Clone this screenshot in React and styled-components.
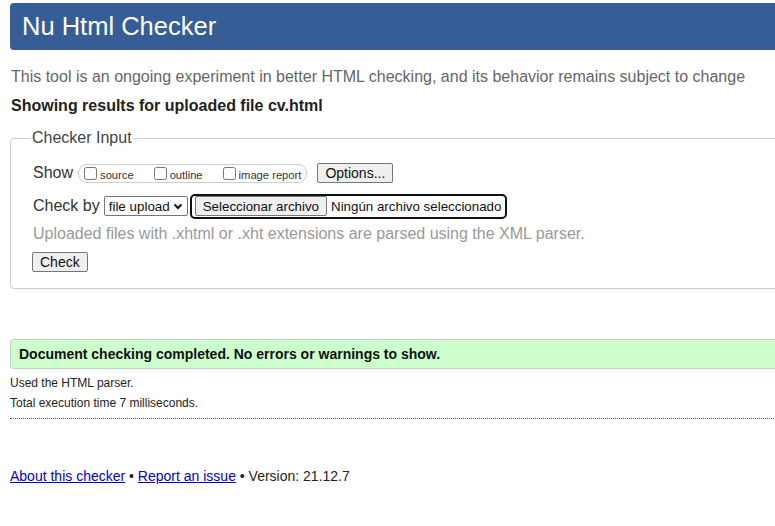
import React from "react"
import styled, { createGlobalStyle } from "styled-components"

const GlobalStyle = createGlobalStyle`
  html, body {
    margin: 0;
    padding: 0;
    background: #fff;
    overflow: hidden;
  }
  body {
    font-family: "Liberation Sans", Arial, sans-serif;
    color: #222;
  }
`

const Page = styled.div`
  width: 1000px;
  padding: 3px 0 0 10px;
`

const TitleBar = styled.h1`
  margin: 0;
  height: 47px;
  display: flex;
  align-items: center;
  padding-left: 12px;
  background: #365d95;
  border-radius: 4px;
  color: #fff;
  font-size: 25.5px;
  font-weight: normal;
`

const Intro = styled.p`
  margin: 17px 0 0 1px;
  line-height: 20px;
  font-size: 16px;
  color: #666;
`

const Showing = styled.p`
  margin: 9px 0 0 1px;
  line-height: 20px;
  font-size: 16px;
  font-weight: bold;
  color: #222;
`

const Fieldset = styled.fieldset`
  margin: 13px 0 0 0;
  padding: 11px 0 8px 22px;
  border: 1px solid #ccc;
  border-radius: 4px;
  display: flex;
  flex-direction: column;
`

const Legend = styled.legend`
  margin-left: -2px;
  padding: 0 1px;
  font-size: 16px;
  color: #444;
`

const Row = styled.div`
  display: flex;
  align-items: center;
  height: ${p => p.h || 34}px;
  margin-left: ${p => p.indent || 0}px;
`

const Label = styled.span`
  font-size: 16px;
  color: #333;
  margin-right: ${p => p.mr || 4}px;
`

const CheckGroup = styled.span`
  display: inline-flex;
  align-items: center;
  height: 17px;
  padding: 0 5px 0 5px;
  border: 1px solid #ccc;
  border-radius: 9px;
  gap: 20px;
`

const CheckItem = styled.label`
  display: inline-flex;
  align-items: center;
  font-size: 11.2px;
  color: #333;
  input {
    margin: 0 3px 0 0;
    width: 13px;
    height: 13px;
  }
  span {
    position: relative;
    top: 2px;
  }
`

const Button = styled.button`
  font-family: "Liberation Sans", Arial, sans-serif;
  font-size: ${p => p.fs || 14}px;
  color: #111;
  height: ${p => p.h || 20}px;
  padding: 0 ${p => p.px || 7}px;
  background: #efefef;
  border: 1px solid #767676;
  border-radius: 2px;
  margin-left: ${p => p.ml || 0}px;
`

const SelectWrap = styled.span`
  position: relative;
  display: inline-flex;
  align-items: center;
  width: 84px;
  height: 20px;
  box-sizing: border-box;
  border: 1px solid #767676;
  border-radius: 2px;
  background: #fff;
  svg {
    position: absolute;
    right: 4px;
    top: 6px;
    pointer-events: none;
  }
`

const Select = styled.select`
  appearance: none;
  font-family: "Liberation Sans", Arial, sans-serif;
  font-size: 13.4px;
  color: #111;
  width: 100%;
  height: 100%;
  padding: 0 0 0 4px;
  border: none;
  background: transparent;
  outline: none;
`

const FileBox = styled.span`
  display: inline-flex;
  align-items: center;
  margin-left: 2px;
  height: 21px;
  padding: 0 4px 0 3px;
  border: 2px solid #101010;
  border-radius: 5px;
  font-size: 13.33px;
  color: #111;
  gap: 4px;
`

const Hint = styled.p`
  margin: 0;
  line-height: 20px;
  font-size: 16px;
  color: #999;
`

const Success = styled.div`
  margin-top: 50px;
  height: 28px;
  display: flex;
  align-items: center;
  padding-left: 8px;
  background: #ccffcc;
  border: 1px solid #bcd4bc;
  border-radius: 3px;
  font-size: 14px;
  font-weight: bold;
  color: #111;
`

const Detail = styled.p`
  margin: 0;
  font-size: 12px;
  line-height: 20px;
  color: #222;
`

const Details = styled.div`
  margin-top: 4px;
  padding-bottom: 5px;
  border-bottom: 1px dotted #555;
`

const Footer = styled.p`
  margin: 49px 0 0 0;
  font-size: 14px;
  color: #222;
  a {
    color: #0000cc;
    text-decoration: underline;
  }
`

const Chevron = () => (
  <svg width="10" height="7" viewBox="0 0 10 7">
    <path d="M1.5 1.5 L5 5 L8.5 1.5" fill="none" stroke="#111" strokeWidth="2" />
  </svg>
)

const App = () => (
  <Page>
    <GlobalStyle />
    <TitleBar>Nu Html Checker</TitleBar>
    <Intro>This tool is an ongoing experiment in better HTML checking, and its behavior remains subject to change</Intro>
    <Showing>Showing results for uploaded file cv.html</Showing>
    <Fieldset>
      <Legend>Checker Input</Legend>
      <Row h={30}>
        <Label mr={5}>Show</Label>
        <CheckGroup>
          <CheckItem><input type="checkbox" /><span>source</span></CheckItem>
          <CheckItem><input type="checkbox" /><span>outline</span></CheckItem>
          <CheckItem><input type="checkbox" /><span>image report</span></CheckItem>
        </CheckGroup>
        <Button ml={10} px={7}>Options...</Button>
      </Row>
      <Row h={36}>
        <Label>Check by</Label>
        <SelectWrap>
          <Select defaultValue="file">
            <option value="file">file upload</option>
          </Select>
          <Chevron />
        </SelectWrap>
        <FileBox>
          <Button h={20} px={7} fs={13.33}>Seleccionar archivo</Button>
          <span>Ningún archivo seleccionado</span>
        </FileBox>
      </Row>
      <Hint>Uploaded files with .xhtml or .xht extensions are parsed using the XML parser.</Hint>
      <Row h={36} indent={-1}>
        <Button px={7}>Check</Button>
      </Row>
    </Fieldset>
    <Success>Document checking completed. No errors or warnings to show.</Success>
    <Details>
      <Detail>Used the HTML parser.</Detail>
      <Detail>Total execution time 7 milliseconds.</Detail>
    </Details>
    <Footer>
      <a href="#about">About this checker</a> • <a href="#issue">Report an issue</a> • Version: 21.12.7
    </Footer>
  </Page>
)

export default App
